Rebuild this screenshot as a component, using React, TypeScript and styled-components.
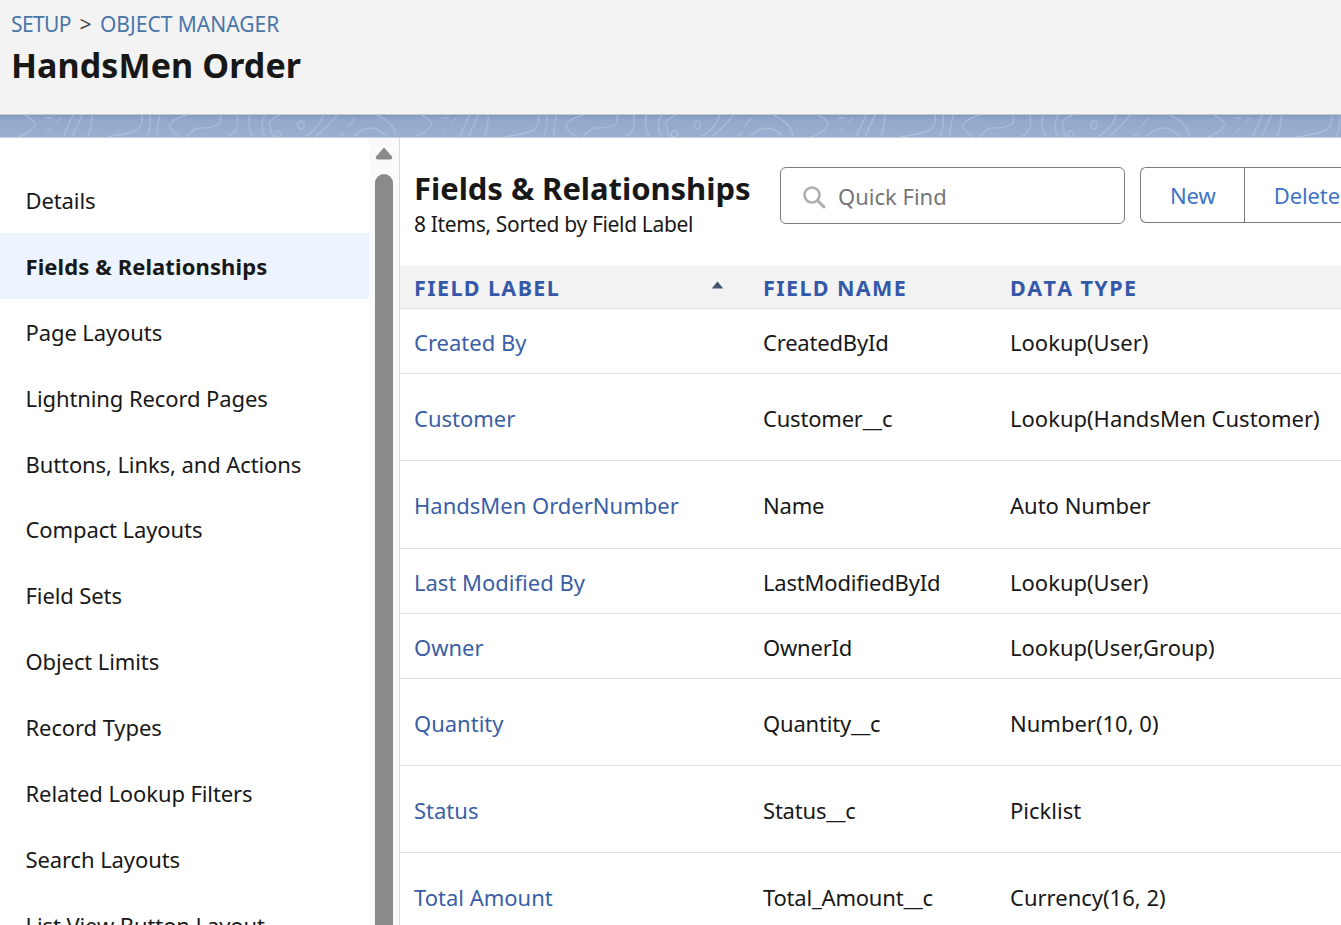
import React from "react";
import styled, { createGlobalStyle } from "styled-components";

const navItems = [
  "Details",
  "Fields & Relationships",
  "Page Layouts",
  "Lightning Record Pages",
  "Buttons, Links, and Actions",
  "Compact Layouts",
  "Field Sets",
  "Object Limits",
  "Record Types",
  "Related Lookup Filters",
  "Search Layouts",
  "List View Button Layout",
];

const rows = [
  { label: "Created By", name: "CreatedById", type: "Lookup(User)", height: 65 },
  { label: "Customer", name: "Customer__c", type: "Lookup(HandsMen Customer)", height: 87 },
  { label: "HandsMen OrderNumber", name: "Name", type: "Auto Number", height: 88 },
  { label: "Last Modified By", name: "LastModifiedById", type: "Lookup(User)", height: 65 },
  { label: "Owner", name: "OwnerId", type: "Lookup(User,Group)", height: 65 },
  { label: "Quantity", name: "Quantity__c", type: "Number(10, 0)", height: 87 },
  { label: "Status", name: "Status__c", type: "Picklist", height: 87 },
  { label: "Total Amount", name: "Total_Amount__c", type: "Currency(16, 2)", height: 87 },
];

export default function App() {
  return (
    <Page>
      <GlobalStyle />
      <Header>
        <Crumbs>
          <CrumbLink $tight>SETUP</CrumbLink>
          <CrumbSep>&gt;</CrumbSep>
          <CrumbLink>OBJECT MANAGER</CrumbLink>
        </Crumbs>
        <ObjectTitle>HandsMen Order</ObjectTitle>
      </Header>
      <Banner>
        <BannerArt aria-hidden="true">
          <defs>
            <pattern id="topo" width="396.5" height="22" patternUnits="userSpaceOnUse">
              <g fill="none" stroke="#c3d0e4" strokeOpacity="0.6" strokeWidth="1">
                <path d="M25 0C33 4 37 9 34 12C30 17 24 20 18 22" />
                <path d="M45 3H52M60 3L55 8M50 13L46 17" />
                <path d="M73 0L63 22M82 0L72 22M92 0C92 8 90 15 88 22" />
                <path d="M142 0C143 8 141 12 137 15C130 19 118 20 107 22" />
                <path d="M150 0C151 8 150 15 147 22M160 0C158 8 157 15 157 22" />
                <path d="M187 0C175 3 169 8 170 12C171 16 176 19 180 22" />
                <path d="M187 22C192 15 197 12 203 13C210 13 218 11 220 8C221 5 221 2 220 0" />
                <path d="M237 0C238 7 238 12 236 15C234 18 231 20 228 22" />
                <path d="M250 0C248 7 248 14 253 22M265 0C261 6 261 15 265 22" />
                <path d="M280 0C271 3 268 8 270 12C272 14 268 18 275 22" />
                <ellipse cx="278" cy="19" rx="3" ry="3" />
                <ellipse cx="301" cy="10" rx="3" ry="4" />
                <path d="M323 0C322 8 314 16 305 22M337 0C331 8 324 15 315 22" />
                <path d="M355 3L348 12M345 18L340 22" />
                <path d="M353 22C360 15 366 13 371 13C377 13 383 18 387 22" />
                <path d="M377 0C387 5 394 11 395 16L397 22" />
              </g>
            </pattern>
          </defs>
          <rect width="100%" height="100%" fill="url(#topo)" />
        </BannerArt>
      </Banner>
      <Body>
        <SidePane>
          <NavList>
            {navItems.map((item) => (
              <NavItem key={item} $active={item === "Fields & Relationships"}>
                {item}
              </NavItem>
            ))}
          </NavList>
          <ScrollTrack>
            <ScrollArrow viewBox="0 0 18 14" aria-hidden="true">
              <path d="M9 1.5 L17 10.5 Q18 13.5 15 13.5 H3 Q0 13.5 1 10.5 Z" fill="#8a8a8a" />
            </ScrollArrow>
            <ScrollThumb />
          </ScrollTrack>
        </SidePane>
        <Main>
          <Toolbar>
            <Heading>
              <PanelTitle>Fields &amp; Relationships</PanelTitle>
              <PanelMeta>8 Items, Sorted by Field Label</PanelMeta>
            </Heading>
            <SearchBox>
              <svg width="26" height="26" viewBox="0 0 26 26" aria-hidden="true">
                <circle cx="11" cy="11" r="7.5" fill="none" stroke="#aeaeae" strokeWidth="2.6" />
                <path d="M16.5 16.5 L23 23" stroke="#aeaeae" strokeWidth="3" strokeLinecap="round" />
              </svg>
              <SearchPlaceholder>Quick Find</SearchPlaceholder>
            </SearchBox>
            <ButtonGroup>
              <GroupButton>New</GroupButton>
              <GroupButton>Delete</GroupButton>
            </ButtonGroup>
          </Toolbar>
          <TableHead>
            <LabelHeadCell>
              FIELD LABEL
              <SortCaret viewBox="0 0 14 9" aria-hidden="true">
                <path d="M7 0.5 L13.5 8.5 H0.5 Z" fill="#44546f" />
              </SortCaret>
            </LabelHeadCell>
            <span>FIELD NAME</span>
            <span>DATA TYPE</span>
          </TableHead>
          {rows.map((row) => (
            <Row key={row.label} $height={row.height}>
              <RowLink>{row.label}</RowLink>
              <NameCell>{row.name}</NameCell>
              <span>{row.type}</span>
            </Row>
          ))}
        </Main>
      </Body>
    </Page>
  );
}

const GlobalStyle = createGlobalStyle`
  html, body {
    margin: 0;
    height: 100%;
    overflow: hidden;
    background: #fff;
  }
  body {
    font-family: "Noto Sans", "Open Sans", sans-serif;
    color: #181818;
  }
`;

const Page = styled.div`
  width: 1341px;
  height: 925px;
  overflow: hidden;
`;

const Header = styled.header`
  height: 115px;
  box-sizing: border-box;
  padding: 8px 0 0 11px;
  background: #f3f3f3;
  border-bottom: 1px solid #c9c9c9;
`;

const Crumbs = styled.div`
  display: flex;
  align-items: center;
  gap: 8.5px;
  height: 32px;
  font-size: 21px;
`;

const CrumbLink = styled.span<{ $tight?: boolean }>`
  color: #4a76a8;
  letter-spacing: ${(p) => (p.$tight ? "-0.6px" : "0")};
`;

const CrumbSep = styled.span`
  color: #444;
`;

const ObjectTitle = styled.h1`
  margin: 2px 0 0;
  font-size: 34px;
  line-height: 46px;
  font-weight: 700;
  letter-spacing: 0.1px;
  color: #181818;
`;

const Banner = styled.div`
  height: 23px;
  background: linear-gradient(#8299bf 0, #93a8ca 5px, #9bb0d1 100%);
  border-bottom: 1px solid #c4cfe0;
  box-sizing: border-box;
`;

const BannerArt = styled.svg`
  display: block;
  width: 100%;
  height: 100%;
`;

const Body = styled.div`
  display: flex;
  height: 787px;
`;

const SidePane = styled.aside`
  display: flex;
  width: 400px;
  flex: none;
  box-sizing: border-box;
  border-right: 1px solid #dddbda;
`;

const NavList = styled.nav`
  width: 369px;
  flex: none;
  padding-top: 29px;
`;

const NavItem = styled.div<{ $active?: boolean }>`
  height: 65.9px;
  box-sizing: border-box;
  display: flex;
  align-items: center;
  padding-left: 25.5px;
  font-size: 22px;
  white-space: nowrap;
  letter-spacing: ${(p) => (p.$active ? "0.1px" : "-0.1px")};
  color: #181818;
  font-weight: ${(p) => (p.$active ? 700 : 400)};
  background: ${(p) => (p.$active ? "#eef4ff" : "transparent")};
`;

const ScrollTrack = styled.div`
  flex: 1;
  display: flex;
  flex-direction: column;
  align-items: center;
  padding-top: 8px;
  background: #fafafa;
`;

const ScrollArrow = styled.svg`
  width: 18px;
  height: 14px;
  flex: none;
`;

const ScrollThumb = styled.div`
  width: 18px;
  flex: 1;
  margin-top: 14px;
  background: #8a8a8a;
  border-radius: 9px 9px 0 0;
`;

const Main = styled.main`
  flex: 1;
  min-width: 0;
  overflow: hidden;
`;

const Toolbar = styled.div`
  display: flex;
  align-items: flex-start;
  height: 128px;
  box-sizing: border-box;
  padding: 29px 0 0 14px;
`;

const Heading = styled.div`
  width: 366px;
  flex: none;
  margin-top: -1px;
`;

const PanelTitle = styled.h2`
  margin: 0;
  font-size: 31px;
  line-height: 44px;
  font-weight: 700;
  letter-spacing: -0.05px;
  color: #181818;
`;

const PanelMeta = styled.div`
  font-size: 21px;
  line-height: 29px;
  letter-spacing: -0.33px;
  color: #181818;
`;

const SearchBox = styled.div`
  width: 345px;
  height: 57px;
  flex: none;
  box-sizing: border-box;
  display: flex;
  align-items: center;
  gap: 11px;
  padding-left: 20px;
  border: 1px solid #7d7d7d;
  border-radius: 6px;
  background: #fff;
  & > svg {
    margin-top: 2px;
  }
`;

const SearchPlaceholder = styled.span`
  font-size: 22px;
  color: #767676;
`;

const ButtonGroup = styled.div`
  display: flex;
  flex: none;
  height: 56px;
  margin-left: 15px;
  box-sizing: border-box;
  border: 1px solid #7d7d7d;
  border-radius: 6px 0 0 6px;
  border-right: 0;
`;

const GroupButton = styled.div`
  display: flex;
  align-items: center;
  padding: 0 29px;
  font-size: 22px;
  letter-spacing: -0.1px;
  color: #3e74c7;
  &:first-child {
    padding: 0 28px 0 29px;
  }
  & + & {
    border-left: 1px solid #7d7d7d;
  }
`;

const rowColumns = `
  display: grid;
  grid-template-columns: 349px 247px 1fr;
  padding-left: 14px;
  box-sizing: border-box;
  align-items: center;
`;

const TableHead = styled.div`
  ${rowColumns}
  height: 43px;
  background: #f3f3f3;
  border-bottom: 1px solid #e1e1e1;
  font-size: 21.5px;
  font-weight: 700;
  letter-spacing: 1.4px;
  font-kerning: none;
  color: #3558a8;
`;

const LabelHeadCell = styled.span`
  display: flex;
  align-items: center;
  justify-content: space-between;
  padding-right: 39px;
`;

const SortCaret = styled.svg`
  width: 13px;
  height: 8px;
  margin-bottom: 4px;
`;

const Row = styled.div<{ $height: number }>`
  ${rowColumns}
  height: ${(p) => p.$height}px;
  padding-top: 1px;
  border-bottom: 1px solid #e1e1e1;
  font-size: 22px;
  white-space: nowrap;
`;

const RowLink = styled.span`
  color: #3a5fa5;
`;

const NameCell = styled.span`
  letter-spacing: -0.2px;
`;
